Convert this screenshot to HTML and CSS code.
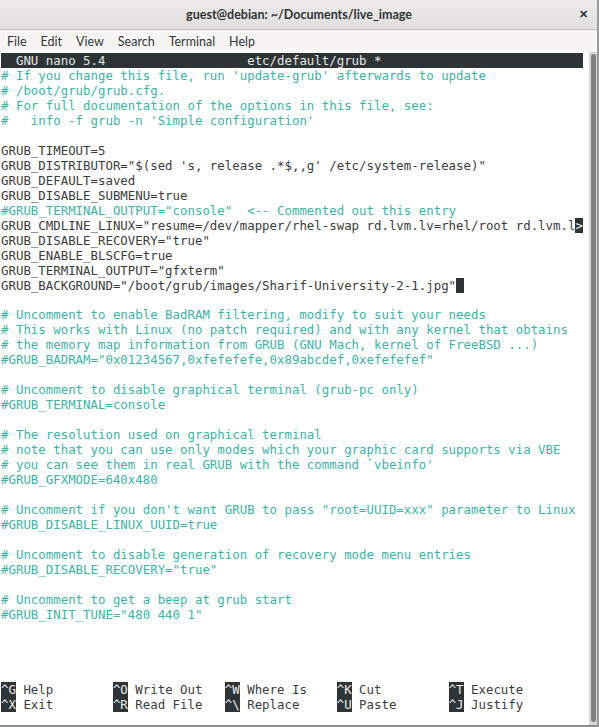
FILE: index.html
```html
<!DOCTYPE html>
<html lang="en">
<head>
    <meta charset="UTF-8">
    <title>guest@debian: ~/Documents/live_image</title>
    <link rel="stylesheet" href="styles.css">
</head>
<body>
    <div class="window">
        <!-- window title -->
        <header class="titlebar">
            <span class="title">guest@debian: ~/Documents/live_image</span>
            <span class="close">&#x2715;</span>
        </header>
        <nav class="menubar">
            <span>File</span>
            <span>Edit</span>
            <span>View</span>
            <span>Search</span>
            <span>Terminal</span>
            <span>Help</span>
        </nav>
        <div class="term">
            <div class="screen">
                <div class="row head">  GNU nano 5.4                   etc/default/grub *</div>
                <div class="row c"># If you change this file, run 'update-grub' afterwards to update</div>
                <div class="row c"># /boot/grub/grub.cfg.</div>
                <div class="row c"># For full documentation of the options in this file, see:</div>
                <div class="row c">#   info -f grub -n 'Simple configuration'</div>
                <div class="row"></div>
                <div class="row">GRUB_TIMEOUT=5</div>
                <div class="row">GRUB_DISTRIBUTOR="$(sed 's, release .*$,,g' /etc/system-release)"</div>
                <div class="row">GRUB_DEFAULT=saved</div>
                <div class="row">GRUB_DISABLE_SUBMENU=true</div>
                <div class="row c">#GRUB_TERMINAL_OUTPUT="console"  &lt;-- Commented out this entry</div>
                <div class="row">GRUB_CMDLINE_LINUX="resume=/dev/mapper/rhel-swap rd.lvm.lv=rhel/root rd.lvm.l<span class="key">&gt;</span></div>
                <div class="row">GRUB_DISABLE_RECOVERY="true"</div>
                <div class="row">GRUB_ENABLE_BLSCFG=true</div>
                <div class="row">GRUB_TERMINAL_OUTPUT="gfxterm"</div>
                <div class="row">GRUB_BACKGROUND="/boot/grub/images/Sharif-University-2-1.jpg"<span class="cursor"> </span></div>
                <div class="row"></div>
                <div class="row c"># Uncomment to enable BadRAM filtering, modify to suit your needs</div>
                <div class="row c"># This works with Linux (no patch required) and with any kernel that obtains</div>
                <div class="row c"># the memory map information from GRUB (GNU Mach, kernel of FreeBSD ...)</div>
                <div class="row c">#GRUB_BADRAM="0x01234567,0xfefefefe,0x89abcdef,0xefefefef"</div>
                <div class="row"></div>
                <div class="row c"># Uncomment to disable graphical terminal (grub-pc only)</div>
                <div class="row c">#GRUB_TERMINAL=console</div>
                <div class="row"></div>
                <div class="row c"># The resolution used on graphical terminal</div>
                <div class="row c"># note that you can use only modes which your graphic card supports via VBE</div>
                <div class="row c"># you can see them in real GRUB with the command `vbeinfo'</div>
                <div class="row c">#GRUB_GFXMODE=640x480</div>
                <div class="row"></div>
                <div class="row c"># Uncomment if you don't want GRUB to pass "root=UUID=xxx" parameter to Linux</div>
                <div class="row c">#GRUB_DISABLE_LINUX_UUID=true</div>
                <div class="row"></div>
                <div class="row c"># Uncomment to disable generation of recovery mode menu entries</div>
                <div class="row c">#GRUB_DISABLE_RECOVERY="true"</div>
                <div class="row"></div>
                <div class="row c"># Uncomment to get a beep at grub start</div>
                <div class="row c">#GRUB_INIT_TUNE="480 440 1"</div>
                <div class="row"></div>
                <div class="row"></div>
                <div class="row"></div>
                <div class="row"></div>
                <!-- nano shortcut help -->
                <div class="row"><span class="key">^G</span> Help        <span class="key">^O</span> Write Out   <span class="key">^W</span> Where Is    <span class="key">^K</span> Cut         <span class="key">^T</span> Execute</div>
                <div class="row"><span class="key">^X</span> Exit        <span class="key">^R</span> Read File   <span class="key">^\</span> Replace     <span class="key">^U</span> Paste       <span class="key">^J</span> Justify</div>
            </div>
            <div class="scrollbar"><div class="thumb"></div></div>
        </div>
    </div>
</body>
</html>
```

FILE: styles.css
```css
:root {
    --fg: #3a3c3c;
    --comment: #3db3a6;
    --dark: #2e3436;
}

body {
    margin: 0;
    background: #fff;
    font-family: Lato, 'Noto Sans', sans-serif;
}

.window {
    width: 599px;
    height: 727px;
    display: flex;
    flex-direction: column;
    box-sizing: border-box;
    border-right: 2px solid #9a9a98;
    border-bottom: 2px solid #8e8e8c;
    overflow: hidden;
}

.titlebar {
    height: 29px;
    flex: none;
    background: linear-gradient(#ecebea, #e1dfdd);
    border-bottom: 1px solid #c4c0bb;
    display: flex;
    align-items: center;
    justify-content: center;
    position: relative;
    color: #2e3436;
}
.title {
    font-weight: 700;
    font-size: 12.5px;
    padding-left: 1px;
}
.close {
    position: absolute;
    right: 9px;
    top: 7px;
    font-size: 11px;
    font-weight: 700;
}

.menubar {
    height: 22px;
    flex: none;
    background: #f6f5f4;
    display: flex;
    align-items: center;
    gap: 14px;
    padding-left: 7px;
    font-size: 12.5px;
    color: #33383a;
}

.term {
    flex: 1;
    display: flex;
    background: #fff;
}
.screen {
    flex: 1;
    padding: 1px 0 0 1px;
    font-family: 'DejaVu Sans Mono', monospace;
    font-size: 12.4px;
    color: var(--fg);
}
.row {
    height: 14.98px;
    line-height: 15px;
    white-space: pre;
}
.row.c { color: var(--comment); }
.row.head {
    width: 78ch;
    background: var(--dark);
    color: #e4e6e6;
}
.key {
    background: var(--dark);
    color: #eceeee;
}
.cursor {
    background: var(--dark);
}

.scrollbar {
    width: 8px;
    flex: none;
    background: #d7d6d5;
    padding: 2px 0 3px 0;
    display: flex;
    justify-content: center;
}
.thumb {
    width: 5px;
    border-radius: 3px;
    background: #7f8283;
}
```
